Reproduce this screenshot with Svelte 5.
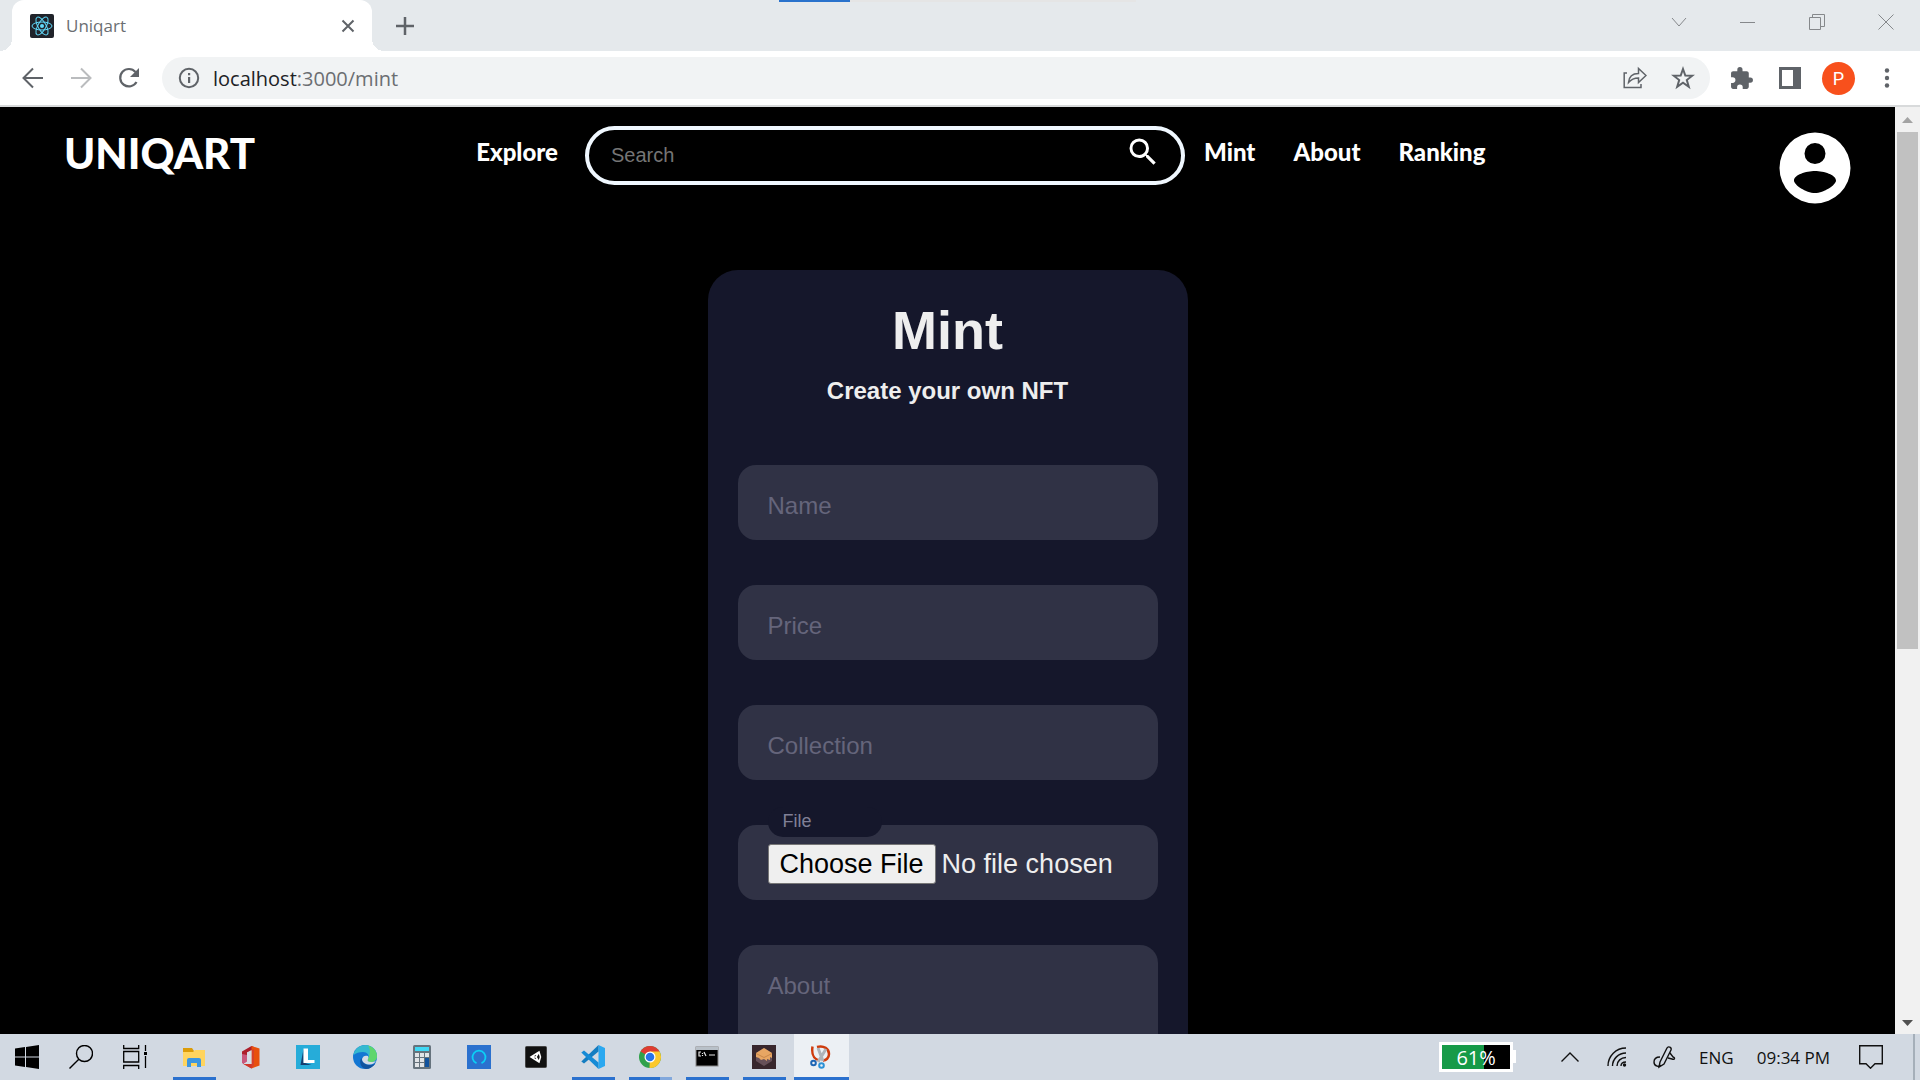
<script>
  let search = '';
  let name = '';
  let price = '';
  let collection = '';
  let about = '';

  const battery = 61;

  const apps = [
    { id: 'explorer', title: 'File Explorer', open: true },
    { id: 'office', title: 'Office' },
    { id: 'lenovo', title: 'Lenovo Vantage' },
    { id: 'edge', title: 'Microsoft Edge' },
    { id: 'calc', title: 'Calculator' },
    { id: 'alexa', title: 'Alexa' },
    { id: 'unity', title: 'Unity Hub' },
    { id: 'code', title: 'Visual Studio Code', open: true },
    { id: 'chrome', title: 'Google Chrome', open: true, stacked: true },
    { id: 'cmd', title: 'Command Prompt', open: true },
    { id: 'ganache', title: 'Ganache', open: true },
    { id: 'snip', title: 'Snipping Tool', open: true, active: true }
  ];
</script>

<div class="desktop">
  <header class="tab-strip">
    <div class="tab">
      <svg class="favicon" viewBox="0 0 24 24" width="24" height="24">
        <rect width="24" height="24" rx="2" fill="#20232a" />
        <g fill="none" stroke="#61dafb">
          <ellipse cx="12" cy="12" rx="10" ry="4" />
          <ellipse cx="12" cy="12" rx="10" ry="4" transform="rotate(60 12 12)" />
          <ellipse cx="12" cy="12" rx="10" ry="4" transform="rotate(120 12 12)" />
        </g>
        <circle cx="12" cy="12" r="2" fill="#61dafb" />
      </svg>
      <span class="tab-title">Uniqart</span>
      <button class="plain" aria-label="Close tab">
        <svg viewBox="0 0 24 24" width="24" height="24" stroke="#5f6368" stroke-width="2"><path d="M6.500 6.500l11 11M17.500 6.500l-11 11" /></svg>
      </button>
    </div>
    <button class="plain new-tab" aria-label="New tab">
      <svg viewBox="0 0 24 24" width="24" height="24" stroke="#5f6368" stroke-width="2.500"><path d="M12 3v18M3 12h18" /></svg>
    </button>
    <div class="window-buttons">
      <button class="plain" aria-label="Search tabs">
        <svg viewBox="0 0 16 16" width="16" height="16"><path d="M1 4l7 8 7-8" /></svg>
      </button>
      <button class="plain" aria-label="Minimize">
        <svg viewBox="0 0 16 16" width="16" height="16"><path d="M0 8.500h15" /></svg>
      </button>
      <button class="plain" aria-label="Restore">
        <svg viewBox="0 0 16 16" width="16" height="16"><path d="M.5 3.500h11v12H.5zM3.500 3.500v-3h12v12h-4" /></svg>
      </button>
      <button class="plain" aria-label="Close">
        <svg viewBox="0 0 16 16" width="16" height="16"><path d="M.5.500l15 15M15.500.500l-15 15" /></svg>
      </button>
    </div>
    <div class="load-bar"><div></div></div>
  </header>

  <div class="toolbar">
    <button class="plain" aria-label="Back">
      <svg viewBox="0 0 24 24" width="24" height="24" fill="none" stroke="#5f6368" stroke-width="2"><path d="M22 12H3M12 2.500L2.500 12l9.500 9.500" /></svg>
    </button>
    <button class="plain" aria-label="Forward">
      <svg viewBox="0 0 24 24" width="24" height="24" fill="none" stroke="#babcbe" stroke-width="2"><path d="M2 12h19M12 2.500l9.500 9.500-9.500 9.500" /></svg>
    </button>
    <button class="plain" aria-label="Reload">
      <svg viewBox="0 0 24 24" width="24" height="24"><path d="M19.500 16A8.700 8.700 0 1 1 18.500 6" fill="none" stroke="#5f6368" stroke-width="2.200" /><path d="M22 2v9h-9z" fill="#5f6368" /></svg>
    </button>
    <div class="address">
      <svg viewBox="0 0 24 24" width="24" height="24"><circle cx="12" cy="12" r="9.200" fill="none" stroke="#5f6368" stroke-width="2" /><path d="M11 7h2.200v2.200H11zM11 11h2.200v6H11z" fill="#5f6368" /></svg>
      <span class="url"><b>localhost</b>:3000/mint</span>
      <button class="plain" aria-label="Share">
        <svg viewBox="0 0 24 24" width="24" height="24" fill="none" stroke="#5f6368" stroke-width="1.500"><path d="M4 7H1.200v14.500H18V18" /><path d="M5.500 16.500c.5-6 4-9 10-9V2.500l7.500 7-7.500 7V12c-4 0-7.500 1.500-10 4.500z" /></svg>
      </button>
      <button class="plain" aria-label="Bookmark">
        <svg viewBox="0 0 24 24" width="24" height="24" fill="none" stroke="#5f6368" stroke-width="2"><path d="M12 3l2.300 6.500 7 .2-5.500 4.300 2 6.800-5.800-4-5.800 4 2-6.800-5.500-4.300 7-.2z" /></svg>
      </button>
    </div>
    <div class="extras">
      <button class="plain" aria-label="Extensions">
        <svg viewBox="1 0 23 23" width="24" height="24"><path fill="#5f6368" d="M20.500 11H19V7c0-1.100-.9-2-2-2h-4V3.500a2.500 2.500 0 0 0-5 0V5H4c-1.100 0-2 .9-2 2v3.800h1.500a2.700 2.700 0 0 1 0 5.400H2V20c0 1.100.9 2 2 2h3.800v-1.500a2.700 2.700 0 0 1 5.400 0V22H17c1.100 0 2-.9 2-2v-4h1.500a2.500 2.500 0 0 0 0-5z" /></svg>
      </button>
      <button class="plain" aria-label="Side panel">
        <svg viewBox="0 0 24 24" width="24" height="24"><path fill="#5f6368" fill-rule="evenodd" d="M1 1h22v22H1zM4 4v16h11V4z" /></svg>
      </button>
      <button class="profile">P</button>
      <button class="plain" aria-label="Menu">
        <svg viewBox="0 0 24 24" width="24" height="24" fill="#5f6368"><circle cx="12" cy="4.500" r="2.200" /><circle cx="12" cy="12" r="2.200" /><circle cx="12" cy="19.500" r="2.200" /></svg>
      </button>
    </div>
  </div>

  <div class="viewport">
    <div class="page">
      <nav class="navbar">
        <a class="brand" href="/">UNIQART</a>
        <a class="nav-link" href="/explore">Explore</a>
        <form class="search" on:submit|preventDefault>
          <input type="text" placeholder="Search" aria-label="Search" bind:value={search} />
          <button class="plain" aria-label="Search">
            <svg viewBox="0 0 24 24" width="36" height="36"><path fill="#fff" d="M15.500 14h-.79l-.28-.27A6.470 6.470 0 0 0 16 9.500 6.500 6.500 0 1 0 9.500 16c1.610 0 3.090-.59 4.230-1.570l.27.28v.79l5 4.990L20.490 19l-4.990-5zm-6 0C7.010 14 5 11.990 5 9.500S7.010 5 9.500 5 14 7.010 14 9.500 11.990 14 9.500 14z" /></svg>
          </button>
        </form>
        <a class="nav-link" href="/mint">Mint</a>
        <a class="nav-link" href="/about">About</a>
        <a class="nav-link" href="/ranking">Ranking</a>
        <a class="account" href="/profile" aria-label="Account">
          <svg viewBox="0 0 72 72" width="72" height="72">
            <path fill="#fff" fill-rule="evenodd" d="M36 .5a35.500 35.500 0 1 0 0 71 35.500 35.500 0 1 0 0-71zM36 11a10.500 10.500 0 1 1 0 21 10.500 10.500 0 1 1 0-21zM36 39c9 0 21 4 21 9.500C57 53 45 61 36 61s-21-8-21-12.500C15 43 27 39 36 39z" />
          </svg>
        </a>
      </nav>

      <form class="card" on:submit|preventDefault>
        <h1>Mint</h1>
        <h2>Create your own NFT</h2>
        <input class="field" type="text" placeholder="Name" aria-label="Name" bind:value={name} />
        <input class="field" type="text" placeholder="Price" aria-label="Price" bind:value={price} />
        <input class="field" type="text" placeholder="Collection" aria-label="Collection" bind:value={collection} />
        <div class="file-field">
          <label for="file">File</label>
          <input class="field" id="file" type="file" />
        </div>
        <textarea class="field" placeholder="About" aria-label="About" bind:value={about}></textarea>
      </form>
    </div>

    <div class="scrollbar">
      <svg viewBox="0 0 24 24" width="24" height="24"><path d="M7 16l5.500-6 5.500 6z" fill="#a3a3a3" /></svg>
      <div class="track"><div class="thumb"></div></div>
      <svg viewBox="0 0 24 24" width="24" height="24"><path d="M7 10h11l-5.500 6z" fill="#505050" /></svg>
    </div>
  </div>

  <footer class="taskbar">
    <button class="system" aria-label="Start">
      <svg viewBox="0 0 24 24" width="24" height="24"><path d="M0 3.500L10 2v9.500H0zM11 1.900L24 0v11.500H11zM0 12.500h10V22L0 20.500zM11 12.500h13V24l-13-1.900z" /></svg>
    </button>
    <button class="system" aria-label="Search">
      <svg viewBox="0 0 24 24" width="24" height="24" fill="none" stroke="#000" stroke-width="1.400"><circle cx="15.500" cy="8.500" r="8" /><path d="M9.800 14.200L.5 23.500" /></svg>
    </button>
    <button class="system" aria-label="Task View">
      <svg viewBox="0 0 24 24" width="24" height="24" fill="none" stroke="#000" stroke-width="1.300"><path d="M.7 0v3.500h15V0M.7 24v-3.500h15V24M.7 6.500h15v10.500H.7zM22.500 0v6M22.500 11v12" /><path d="M21 7h3v3h-3z" fill="#000" stroke="none" /></svg>
    </button>
    <div class="apps">
      {#each apps as app (app.id)}
        <button class="app" class:open={app.open} class:active={app.active} class:stacked={app.stacked} title={app.title} aria-label={app.title}>
          <svg viewBox="0 0 24 24" width="24" height="24">
            {#if app.id === 'explorer'}
              <path d="M1 3h9l2 3v3H1z" fill="#dc9c08" />
              <path d="M1 7h10l2-2h10v16H1z" fill="#ffd45e" />
              <path d="M5 22v-7q0-2 2-2h10q2 0 2 2v7h-4v-4H9v4z" fill="#3d96df" />
            {:else if app.id === 'office'}
              <path d="M3 6.500L12.500 1l2.500 1v3L8 7.500v9L4.500 19 3 17.500z" fill="#ad1f2b" />
              <path d="M3 9v8.500L4.500 19 8 16.500V10z" fill="#c9587c" />
              <path d="M12.500 1L20.500 3.500v17l-8 3z" fill="#e8500d" />
              <path d="M4.500 19h8V5l2.500-1v16l-2.500 3.500z" fill="#d8402a" />
              <path d="M8 7.500L12.500 5v14H4.500L8 16.500z" fill="#d5dbe4" />
              <path d="M4.500 19h8v4.500z" fill="#d0372a" />
            {:else if app.id === 'lenovo'}
              <rect width="24" height="24" fill="#26acd9" />
              <path d="M4.500 20L7.500 4v13.500l8 2.500z" fill="#173f70" />
              <path d="M7.500 3.500H12V15h6.500v3h-11z" fill="#fff" />
            {:else if app.id === 'edge'}
              <circle cx="12" cy="12" r="12" fill="#1377d3" />
              <path d="M.5 10C1.500 4 6.500 0 12.500 0 19 0 24 5 24 11c0 4-3 6-6 6-3 0-4-1-3-3 2-4-1-7-5-7-4 0-7 1-9.500 3z" fill="#35b9d0" />
              <path d="M15 0.500C20.500 2 24 6 24 11c0 4-3 6-6 6-3 0-4-1-3-3 2-5 3-9 0-13.500z" fill="#5fd66c" />
              <path d="M8.500 13c0 4 3.500 7 8 7 2 0 4-.5 6-1.500C20 22 16.500 24 13 24c-6-1-7-8-4.500-11z" fill="#12549e" />
              <path d="M9 14c1-3 3-4 6-3 .5 1 .5 2 0 3-1 2 0 3 3 3 2 0 4-.5 5-1.500-1 2.500-3.500 4-6 4-4.500 0-8-2-8-5.500z" fill="#d4dbe5" />
            {:else if app.id === 'calc'}
              <rect x="3" width="18" height="24" rx="1.500" fill="#66737d" />
              <rect x="5" y="2" width="14" height="4" fill="#40d8f5" />
              <path d="M5 8h4v4H5zM10 8h4v4h-4zM15 8h4v4h-4zM5 13h4v4H5zM10 13h4v4h-4zM5 18h4v4H5zM10 18h4v4h-4z" fill="#e1e4e7" />
              <path d="M15 13h4v9h-4z" fill="#12539d" />
            {:else if app.id === 'alexa'}
              <rect width="24" height="24" fill="#2b71ce" />
              <path d="M9.500 18.200a6.500 6.500 0 1 1 5 0" fill="none" stroke="#0bd0f6" stroke-width="1.800" />
            {:else if app.id === 'unity'}
              <rect x="1.500" y="1.500" width="21" height="21" rx="1" fill="#111" stroke="#444" />
              <path d="M7 12l8-5 1.500 5-1.500 5zM7 12h5l3-5M12 12l3 5" fill="none" stroke="#fff" stroke-width="1.500" />
            {:else if app.id === 'code'}
              <path d="M17.500 0L24 3v18l-6.500 3z" fill="#2ba8f0" />
              <path d="M17.500 0v6.500L3 18.500.3 16.500z" fill="#147dc1" />
              <path d="M17.500 24v-6.500L3 5.500.3 7.500z" fill="#168bd6" />
            {:else if app.id === 'chrome'}
              <circle cx="12" cy="12" r="11" fill="#30a14b" />
              <path d="M12 12L2.500 6.500A11 11 0 0 1 21.500 6.500z" fill="#df3c32" />
              <path d="M12 12V6.500h9.500A11 11 0 0 1 11.500 23z" fill="#fcc82c" />
              <circle cx="12" cy="12" r="5.500" fill="#fff" />
              <circle cx="12" cy="12" r="4.300" fill="#2873e8" />
            {:else if app.id === 'cmd'}
              <rect x="1" y="2" width="22" height="19" fill="#000" stroke="#888" />
              <path d="M1 2h22v3H1z" fill="#b8c0c8" />
              <path d="M6 7H4v4h2M7.500 8v1M7.500 10v1M9 7l2 4M14 10h6" fill="none" stroke="#e5e5e5" stroke-width="1.200" />
            {:else if app.id === 'ganache'}
              <rect width="24" height="24" fill="#38272d" />
              <path d="M4 8l8-5 8 5v8l-8 5-8-5z" fill="#665058" />
              <path d="M4 8l8-5 8 5v5l-2-1v3l-3-1v2l-3-2-3 1-2-2-3-1z" fill="#e8a663" />
              <path d="M4 8.500l8 4 8-4" fill="none" stroke="#c98649" />
            {:else}
              <path d="M3.500 1.500c-1 7 0 12 7 14M8 2c7-2 12 2 12 7 0 4-3 6.500-6 6.500" fill="none" stroke="#cf3b0c" stroke-width="2.500" />
              <path d="M9 3l5 13M17 4l-8 13" stroke="#aeb3b9" stroke-width="3" />
              <circle cx="4.500" cy="18" r="2.300" fill="none" stroke="#1d65b4" stroke-width="2" />
              <circle cx="12.500" cy="20.500" r="2.300" fill="none" stroke="#2c91d6" stroke-width="2" />
            {/if}
          </svg>
        </button>
      {/each}
    </div>
    <div class="tray">
      <div class="battery">
        <div class="level" style="width: {battery}%"></div>
        <span>{battery}%</span>
      </div>
      <svg viewBox="0 0 24 24" width="24" height="24" class="chevron"><path d="M3.500 16.500L12 8l8.500 8.500" /></svg>
      <svg viewBox="0 0 24 24" width="24" height="24" class="wifi"><path d="M3 21C3 11 11 3 21 3M7.500 21c0-7 6-13 13.500-13M12 21c0-5 4-8.500 9-8.500M16 21c0-2.500 2-4 5-4" /><circle cx="19.500" cy="20" r="1.700" fill="#111" stroke="none" /></svg>
      <svg viewBox="0 0 24 24" width="24" height="24" class="pen"><path d="M8 17L15 3c1-2 5-1 4 2l-7 14-5 3zM8 12c-4 0-6 2-6 5 0 5 6 5 7 3M18 8l3 4c3 1 1 3-1 2l-4-1" /></svg>
      <span class="lang">ENG</span>
      <span class="clock">09:34 PM</span>
      <svg viewBox="0 0 24 24" width="24" height="24" class="notes"><path d="M.7.700h22.600v18h-7.300l-4.500 4.500L7 18.700H.7z" /></svg>
      <div class="show-desktop"></div>
    </div>
  </footer>
</div>

<style>
  :global(body) {
    margin: 0;
    background: #000;
  }

  .desktop {
    height: 100vh;
    display: flex;
    flex-direction: column;
    overflow: hidden;
    font-family: 'Open Sans', 'Noto Sans', sans-serif;
  }

  .plain {
    display: flex;
    padding: 0;
    border: none;
    background: none;
    cursor: pointer;
  }

  a {
    color: #fff;
    text-decoration: none;
  }

  /* browser chrome */
  .tab-strip {
    position: relative;
    display: flex;
    flex: 0 0 51px;
    padding-left: 12px;
    background: #e5e9ec;
  }

  .tab {
    position: relative;
    display: flex;
    align-items: center;
    gap: 12px;
    box-sizing: border-box;
    width: 360px;
    padding: 0 12px 0 18px;
    border-radius: 12px 12px 0 0;
    background: #fff;
  }

  .tab::before,
  .tab::after {
    content: '';
    position: absolute;
    bottom: 0;
    width: 12px;
    height: 12px;
  }

  .tab::before {
    left: -12px;
    background: radial-gradient(circle at 0 0, #e5e9ec 12px, #fff 12px);
  }

  .tab::after {
    right: -12px;
    background: radial-gradient(circle at 100% 0, #e5e9ec 12px, #fff 12px);
  }

  .tab-title {
    flex: 1;
    font-size: 17px;
    color: #6b6e72;
  }

  .new-tab {
    align-items: center;
    margin-left: 21px;
  }

  .window-buttons {
    display: flex;
    gap: 53px;
    height: 43px;
    margin-left: auto;
    padding-right: 26px;
  }

  .window-buttons .plain {
    align-items: center;
  }

  .window-buttons svg {
    fill: none;
    stroke: #85888b;
  }

  .load-bar {
    position: absolute;
    top: 0;
    left: 779px;
    width: 357px;
    height: 2px;
    background: #e5e5e5;
  }

  .load-bar div {
    width: 20%;
    height: 100%;
    background: #2a72cc;
  }

  .toolbar {
    display: flex;
    align-items: center;
    gap: 24px;
    flex: 0 0 54px;
    padding: 0 21px;
    border-bottom: 2px solid #d8dadb;
    background: #fff;
  }

  .address {
    display: flex;
    align-items: center;
    gap: 12px;
    flex: 1;
    height: 42px;
    padding: 0 15px;
    margin-left: -3px;
    border-radius: 21px;
    background: #f1f3f4;
  }

  .address .plain {
    margin-left: 12px;
  }

  .url {
    flex: 1;
    font-size: 20px;
    color: #6b6e72;
  }

  .url b {
    font-weight: 400;
    color: #202124;
  }

  .extras {
    display: flex;
    align-items: center;
    gap: 24px;
    margin-left: -4px;
  }

  .profile {
    width: 33px;
    height: 33px;
    margin: 0 -4px;
    padding: 0;
    border: none;
    border-radius: 50%;
    background: #f8501c;
    color: #fff;
    font: 18px Roboto, sans-serif;
  }

  /* web page */
  .viewport {
    display: flex;
    flex: 1;
    min-height: 0;
  }

  .page {
    flex: 1;
    overflow: hidden;
    background: #000;
    font-family: 'Liberation Sans', Arial, sans-serif;
  }

  .navbar {
    display: flex;
    align-items: flex-start;
    padding: 19px 44px 0 64px;
    font-family: Lato, 'Open Sans', sans-serif;
    font-weight: 900;
  }

  .brand {
    flex: 0 0 22%;
    font-size: 42px;
    line-height: 54px;
  }

  .nav-link {
    padding: 0 19px;
    font-size: 24px;
    line-height: 52px;
  }

  .search {
    display: flex;
    box-sizing: border-box;
    width: 600px;
    height: 59px;
    margin-left: 8px;
    padding: 0 20px 0 22px;
    border: 4px solid aliceblue;
    border-radius: 30px;
  }

  .search input {
    flex: 1;
    padding: 0;
    border: none;
    outline: none;
    background: none;
    color: #fff;
    font: 20px 'Liberation Sans', Arial, sans-serif;
  }

  .search input::placeholder {
    color: #757575;
  }

  .search .plain {
    height: 44px;
    align-items: center;
  }

  .account {
    margin: 6px 0 0 auto;
  }

  .account svg {
    display: block;
  }

  .card {
    display: flex;
    flex-direction: column;
    gap: 45px;
    box-sizing: border-box;
    width: 480px;
    margin: 66px auto 0;
    padding: 30px;
    border-radius: 30px;
    background: #15172b;
    color: #eee;
  }

  h1,
  h2 {
    margin: 0;
    text-align: center;
  }

  h1 {
    font-size: 54px;
    line-height: 60px;
  }

  h2 {
    margin: -28px 0 16px;
    font-size: 24px;
    line-height: 27px;
  }

  .field {
    display: block;
    box-sizing: border-box;
    width: 100%;
    height: 75px;
    padding: 6px 30px 0;
    border: none;
    border-radius: 18px;
    outline: none;
    background: #303245;
    color: #eee;
    font: 24px 'Liberation Sans', Arial, sans-serif;
  }

  .field::placeholder {
    color: #65657b;
    opacity: 1;
  }

  textarea.field {
    height: 180px;
    padding-top: 27px;
    resize: none;
  }

  .file-field {
    position: relative;
  }

  .file-field label {
    position: absolute;
    top: -18px;
    left: 30px;
    box-sizing: border-box;
    width: 114px;
    height: 30px;
    padding-left: 15px;
    border-radius: 15px;
    background: #15172b;
    color: #808097;
    font-size: 18px;
    line-height: 28px;
  }

  .file-field .field {
    padding-top: 19px;
    font-size: 27px;
  }

  .field::file-selector-button {
    height: 40px;
    margin-right: 6px;
    padding: 0 11px;
    border: 1px solid #767676;
    border-radius: 3px;
    background: #efefef;
    color: #000;
    font: inherit;
  }

  .scrollbar {
    display: flex;
    flex-direction: column;
    width: 25px;
    background: #f1f1f1;
  }

  .track {
    flex: 1;
    padding: 1px 2px;
  }

  .thumb {
    height: 59%;
    background: #c1c1c1;
  }

  /* taskbar */
  .taskbar {
    display: flex;
    flex: 0 0 46px;
    background: #d2d9e2;
  }

  .system {
    display: flex;
    justify-content: center;
    align-items: center;
    width: 54px;
    padding: 0;
    border: none;
    background: none;
  }

  .apps {
    display: flex;
    gap: 2px;
    margin-left: 5px;
  }

  .app {
    position: relative;
    width: 55px;
    padding: 0;
    border: none;
    background: none;
  }

  .app svg {
    display: block;
    margin: 0 15px;
  }

  .app.open::after {
    content: '';
    position: absolute;
    bottom: 0;
    left: 6px;
    right: 6px;
    height: 3px;
    background: #2b71ce;
  }

  .app.stacked::after {
    background: linear-gradient(to right, #2b71ce 31px, #82a8dc 31px);
  }

  .app.active {
    background: #ecf0f4;
  }

  .app.active::after {
    left: 0;
    right: 0;
  }

  .tray {
    display: flex;
    align-items: center;
    gap: 23px;
    margin-left: auto;
    font-size: 17px;
    color: #111;
  }

  .tray svg {
    fill: none;
    stroke: #111;
    stroke-width: 1.400;
  }

  .battery {
    position: relative;
    width: 68px;
    height: 24px;
    margin-right: 22px;
    border: 3px solid #fff;
    background: #000;
  }

  .battery::after {
    content: '';
    position: absolute;
    top: 5px;
    right: -6px;
    width: 3px;
    height: 13px;
    background: #fff;
  }

  .level {
    height: 100%;
    background: #169a48;
  }

  .battery span {
    position: absolute;
    inset: 0;
    text-align: center;
    font-size: 20px;
    line-height: 26px;
    color: #fff;
  }

  .notes {
    margin-left: 6px;
  }

  .show-desktop {
    align-self: stretch;
    width: 5px;
    margin-left: 7px;
    border-left: 2px solid #a5afb9;
  }
</style>
